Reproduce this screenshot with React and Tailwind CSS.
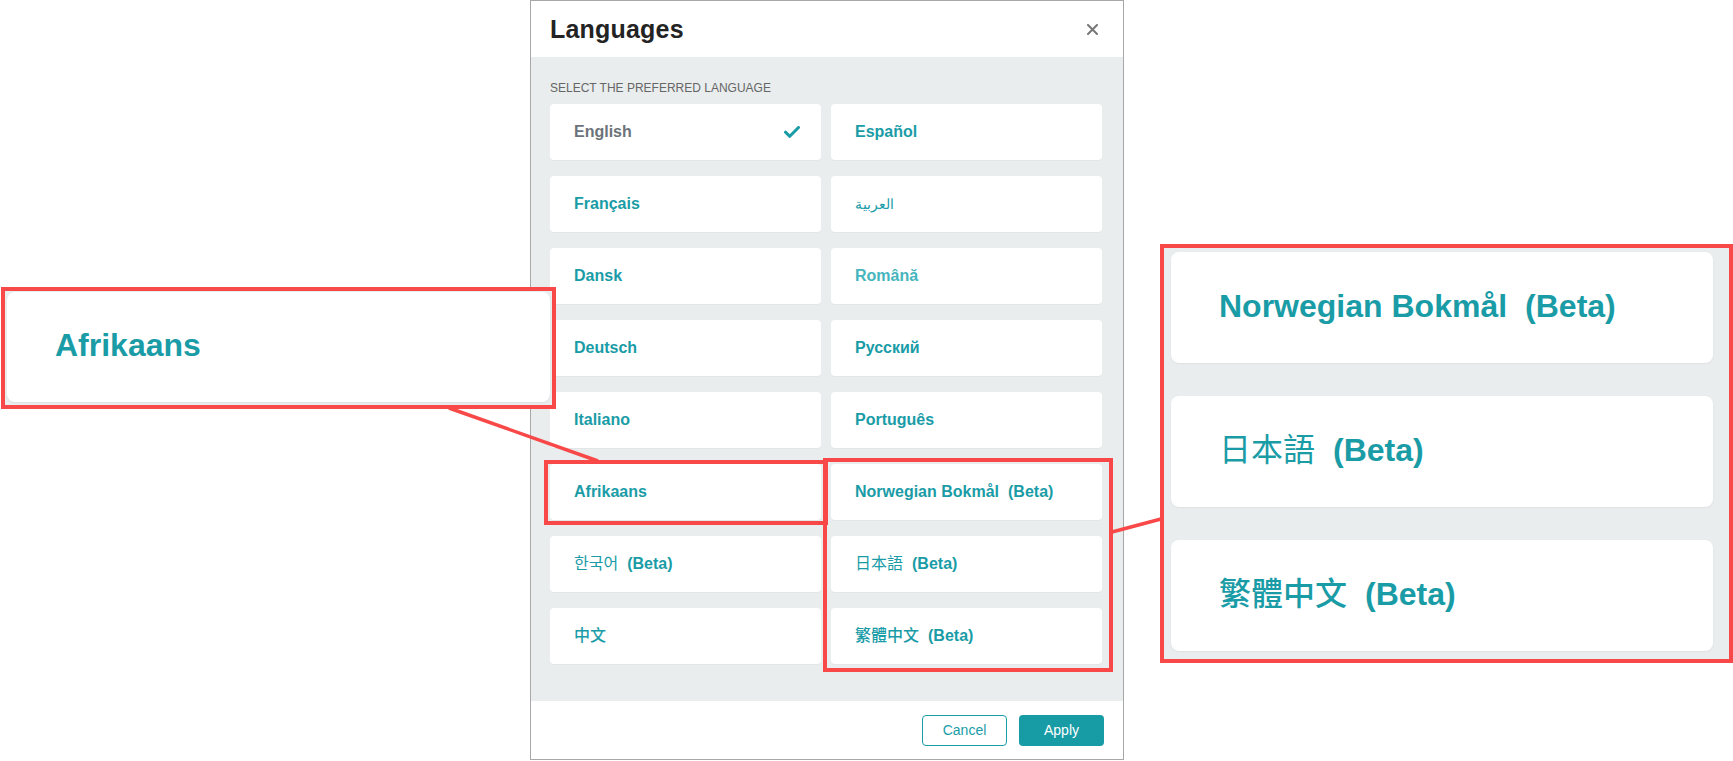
import React from 'react';

const languages = [
    { name: 'English', selected: true },
    { name: 'Español' },
    { name: 'Français' },
    { name: 'العربية', arabic: true },
    { name: 'Dansk' },
    { name: 'Română', light: true },
    { name: 'Deutsch' },
    { name: 'Русский' },
    { name: 'Italiano' },
    { name: 'Português' },
    { name: 'Afrikaans' },
    { name: 'Norwegian Bokmål', beta: true },
    { name: '한국어', beta: true, cjk: true },
    { name: '日本語', beta: true, cjk: true },
    { name: '中文', cjk: true, heavy: true },
    { name: '繁體中文', beta: true, cjk: true, heavy: true },
];

const LangLabel = ({ lang, big }) => {
    let color = 'text-[#1a9ca7]';
    if (lang.selected) color = 'text-[#6c737a]';
    if (lang.light) color = 'text-[#46b5be]';

    let nameWeight = 'font-bold';
    if (lang.cjk) nameWeight = lang.heavy ? 'font-medium' : 'font-normal';
    if (lang.arabic) nameWeight = 'font-normal';

    const size = big ? 'text-[32px]' : lang.arabic ? 'text-[14px]' : 'text-[16px]';

    return (
        <span className={`${size} ${color} whitespace-nowrap`}>
            <span className={nameWeight}>{lang.name}</span>
            {lang.beta && <span className={`font-bold ${big ? 'ml-[18px]' : 'ml-[9px]'}`}>(Beta)</span>}
        </span>
    );
};

const LangCard = ({ lang }) => (
    <div className="flex h-[56px] items-center justify-between rounded-[4px] bg-white pl-[24px] pr-[21px] shadow-[0_1px_1px_rgba(0,0,0,0.03)]">
        <LangLabel lang={lang} />
        {lang.selected && (
            <svg width="16" height="12" viewBox="0 0 16 12" fill="none">
                <path d="M1.5 6.2l4.3 4.1L14.5 1.5" stroke="#1a9ca7" strokeWidth="3" strokeLinecap="round" strokeLinejoin="round" />
            </svg>
        )}
    </div>
);

const BigCard = ({ lang }) => (
    <div className="flex h-[111px] w-[542px] shrink-0 items-center rounded-[8px] bg-white pb-[4px] pl-[48px] shadow-[0_1px_2px_rgba(0,0,0,0.05)]">
        <LangLabel lang={lang} big />
    </div>
);

const App = () => {
    const byName = (n) => languages.find((l) => l.name === n);

    return (
        <div className="relative h-[761px] w-[1733px] overflow-hidden bg-white font-['Liberation_Sans','Noto_Sans_CJK_SC',sans-serif]">
            {/* modal */}
            <div className="ml-[530px] flex h-[760px] w-[594px] flex-col border border-[#a8a8a8] bg-white">
                <div className="flex h-[56px] shrink-0 items-center justify-between pl-[19px] pr-[25px]">
                    <h2 className="text-[25px] font-bold leading-none tracking-[0.2px] text-[#232323]">Languages</h2>
                    <svg width="11" height="11" viewBox="0 0 11 11" fill="none">
                        <path d="M1 1l9 9M10 1l-9 9" stroke="#777" strokeWidth="2" strokeLinecap="round" />
                    </svg>
                </div>

                <div className="flex-1 bg-[#e9eded] pl-[19px] pr-[21px] pt-[24px]">
                    <p className="mb-[9px] text-[12px] leading-[14px] uppercase text-[#666]">Select the preferred language</p>
                    <div className="grid grid-cols-2 gap-x-[10px] gap-y-[16px]">
                        {languages.map((lang) => (
                            <LangCard key={lang.name} lang={lang} />
                        ))}
                    </div>
                </div>

                <div className="flex h-[58px] shrink-0 items-center justify-end gap-[12px] pr-[19px]">
                    <button className="h-[31px] w-[85px] rounded-[4px] border border-[#1a9ca7] bg-white text-[14px] text-[#1a9ca7]">
                        Cancel
                    </button>
                    <button className="h-[31px] w-[85px] rounded-[4px] bg-[#179ca6] text-[14px] text-white">
                        Apply
                    </button>
                </div>
            </div>

            {/* annotation: left callout */}
            <div className="absolute left-[1px] top-[287px] flex h-[122px] w-[555px] border-[4px] border-[#f84848] bg-[#e9eded] pb-[3px] pl-[2px] pr-[2px] pt-[1px]">
                <div className="flex flex-1 items-center rounded-[8px] bg-white pb-[4px] pl-[48px] shadow-[0_1px_2px_rgba(0,0,0,0.06)]">
                    <LangLabel lang={byName('Afrikaans')} big />
                </div>
            </div>

            {/* annotation: right callout */}
            <div className="absolute left-[1160px] top-[244px] flex h-[419px] w-[573px] flex-col gap-[33px] border-[4px] border-[#f84848] bg-[#e9eded] pl-[7px] pt-[4px]">
                <BigCard lang={byName('Norwegian Bokmål')} />
                <BigCard lang={byName('日本語')} />
                <BigCard lang={byName('繁體中文')} />
            </div>

            {/* annotation boxes on the modal */}
            <div className="absolute left-[544px] top-[460px] h-[65px] w-[284px] border-[4px] border-[#f84848]" />
            <div className="absolute left-[823px] top-[458px] h-[214px] w-[290px] border-[4px] border-[#f84848]" />

            <svg className="pointer-events-none absolute left-0 top-0" width="1733" height="761">
                <line x1="449" y1="408" x2="598" y2="461" stroke="#f84848" strokeWidth="3.5" />
                <line x1="1112" y1="532" x2="1161" y2="519" stroke="#f84848" strokeWidth="3.5" />
            </svg>
        </div>
    );
};

export default App;
